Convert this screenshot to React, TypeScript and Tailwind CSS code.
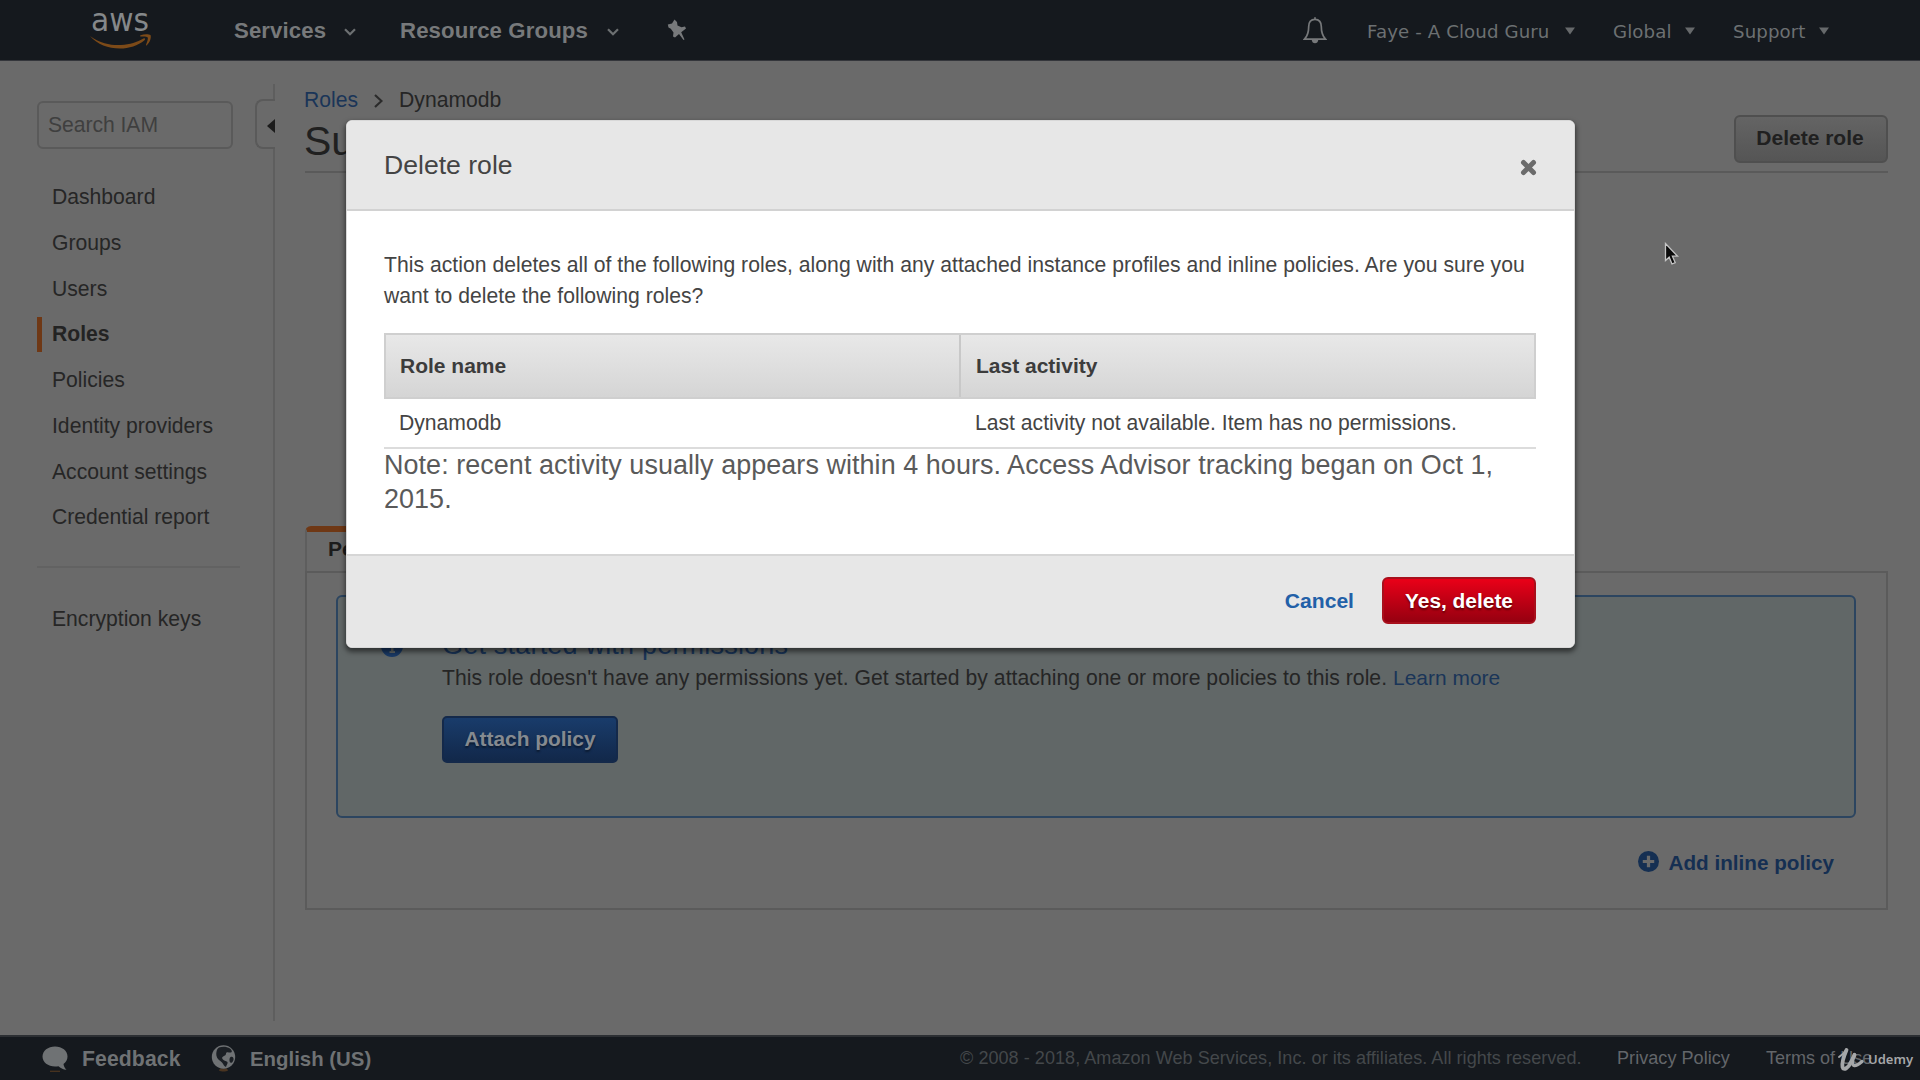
import type { ReactNode } from "react";

const NAV = [
  "Dashboard",
  "Groups",
  "Users",
  "Roles",
  "Policies",
  "Identity providers",
  "Account settings",
  "Credential report",
];

function AwsLogo() {
  return (
    <svg className="ml-[88px] h-[60px] w-[66px] shrink-0" viewBox="0 0 66 60">
      <text
        x="3"
        y="30.5"
        textLength="58"
        lengthAdjust="spacingAndGlyphs"
        fontSize="32"
        fill="#85888a"
        className="font-['DejaVu_Sans',sans-serif] font-normal"
      >
        aws
      </text>
      <path d="M2 36C13 44 24 45.500 33 45C42 44.500 49 42 55.500 38.500C57 37.800 57.800 39 56.500 40.200C50 45.500 41 48.500 32 48.500C20 48.500 9.500 44.500 2 36Z" fill="#7c4a18" />
      <path d="M52.500 35.200C56 33.800 61 34 62.500 35C63.500 37.500 62 42.500 58.800 45.200C58 45.700 57.800 45.300 58.100 44.500C59.300 41.500 60.400 38.300 59.600 37.200C58.500 36.200 55.500 36.400 53 36.500C52 36.500 51.800 35.700 52.500 35.200Z" fill="#7c4a18" />
    </svg>
  );
}

function Chevron({ className }: { className: string }) {
  return (
    <svg className={`h-2 w-3 shrink-0 ${className}`} viewBox="0 0 12 8" fill="none" stroke="#6c7072" strokeWidth="2.2">
      <path d="M1 1.200L6 6.200L11 1.200" />
    </svg>
  );
}

function Caret({ className }: { className: string }) {
  return (
    <svg className={`h-[8px] w-[10px] shrink-0 ${className}`} viewBox="0 0 10 8" fill="#66696b">
      <path d="M0 0.500H10L5 7.500Z" />
    </svg>
  );
}

function TopMenu({ label, width, children }: { label: string; width: string; children: ReactNode }) {
  return (
    <div className={`flex shrink-0 items-center ${width}`}>
      <span className="pt-[3px] font-['DejaVu_Sans',sans-serif] text-[18.2px] tracking-[0.1px] whitespace-nowrap text-[#6c7072]">
        {label}
      </span>
      {children}
    </div>
  );
}

function Header() {
  return (
    <header className="flex h-[61px] shrink-0 items-center border-b border-[#34363b] bg-[#15191e] text-[22.2px] font-bold text-[#77797b]">
      <AwsLogo />
      <span className="mt-[2px] ml-[80px] w-[92px] shrink-0 tracking-[0.1px] whitespace-nowrap">Services</span>
      <Chevron className="mt-[3px] ml-[18px]" />
      <span className="mt-[2px] ml-[44px] w-[187px] shrink-0 tracking-[0.12px] whitespace-nowrap">Resource Groups</span>
      <Chevron className="mt-[3px] ml-[20px]" />
      <svg className="ml-[48px] h-[22px] w-[20px] shrink-0" viewBox="0 0 20 22" fill="#77797b">
        <path d="M7.500 0.500L10 3L10.500 6.500L14.500 8.200L18 7.500L19 9.500L14.200 13.200L17.500 20.500L16.500 21L12 15L8 18.500L6 17.500L6.500 13.500L3.800 9.800L1.500 8.500L0.800 5.500L5 4.500Z" />
      </svg>
      <svg className="ml-auto h-[27px] w-[24px] shrink-0" viewBox="0 0 24 27" fill="none" stroke="#77797b" strokeWidth="1.700">
        <path d="M12 2.300C7.700 2.300 5.700 5.500 5.700 9.500C5.700 16 4.500 19 1.500 22.200H22.500C19.500 19 18.300 16 18.300 9.500C18.300 5.500 16.300 2.300 12 2.300ZM12 2.300V0.300" />
        <path d="M8.700 22.800C9 25.200 10.200 26.300 12 26.300C13.800 26.300 15 25.200 15.300 22.800Z" fill="#77797b" stroke="none" />
      </svg>
      <div className="flex w-[593px] shrink-0 pl-[40px] font-normal">
        <TopMenu label="Faye - A Cloud Guru" width="w-[246px]">
          <Caret className="mt-[3px] ml-[15px]" />
        </TopMenu>
        <TopMenu label="Global" width="w-[120px]">
          <Caret className="mt-[3px] ml-[13px]" />
        </TopMenu>
        <TopMenu label="Support" width="w-[120px]">
          <Caret className="mt-[3px] ml-[13px]" />
        </TopMenu>
      </div>
    </header>
  );
}

function Sidebar() {
  return (
    <aside className="flex w-[275px] shrink-0">
      <div className="w-[218px] pl-[37px]">
        <div className="mt-[40px] flex h-[48px] w-[196px] items-center rounded-md border-2 border-[#5a5a5a] pl-[9px] tracking-[-0.05px] text-[#3f3f3f]">
          Search IAM
        </div>
        <nav className="mt-[25px]">
          {NAV.map((item) => (
            <div key={item} className="flex h-[45.75px] items-center">
              <div
                className={
                  item === "Roles"
                    ? "flex h-[35px] items-center border-l-[5px] border-[#6f3815] pl-[10px] font-bold whitespace-nowrap text-[#232323]"
                    : "pl-[15px] whitespace-nowrap text-[#262626]"
                }
              >
                {item}
              </div>
            </div>
          ))}
        </nav>
        <div className="mt-[26px] w-[203px] border-t-2 border-[#626262]" />
        <div className="mt-[28px] flex h-[46px] items-center pl-[15px] whitespace-nowrap text-[#262626]">Encryption keys</div>
      </div>
      <div className="ml-[37px] flex w-[20px] flex-col">
        <div className="mt-[23px] h-[15px] border-r-2 border-[#5e5e5e]" />
        <div className="flex h-[50px] items-center justify-end rounded-l-lg border-2 border-r-0 border-[#5a5a5a] pt-[3px]">
          <svg className="h-[14px] w-[8px]" viewBox="0 0 8 14" fill="#1c1c1c">
            <path d="M8 0V14L0 7Z" />
          </svg>
        </div>
        <div className="h-[872px] border-r-2 border-[#5e5e5e]" />
      </div>
    </aside>
  );
}

function Main() {
  return (
    <main className="ml-[30px] w-[1583px] shrink-0">
      <div className="mt-[23px] flex h-[30px] items-center pt-[2px]">
        <span className="-ml-px text-[#1a3558]">Roles</span>
        <svg className="mt-[2px] ml-[16px] h-[14px] w-[9px]" viewBox="0 0 9 14" fill="none" stroke="#2b2b2b" strokeWidth="2.200">
          <path d="M1 1L7.500 7L1 13" />
        </svg>
        <span className="ml-[16px] text-[#252525]">Dynamodb</span>
      </div>
      <div className="flex h-[59px] justify-between border-b-2 border-[#5a5a5a]">
        <h1 className="-ml-px text-[41px] leading-[54px] text-[#202020]">Summary</h1>
        <button className="mt-[1px] flex h-[48px] w-[154px] items-center justify-center rounded-md border-2 border-[#4f4f4f] bg-linear-to-b from-[#646464] to-[#555555] pr-[2px] pb-[3px] text-[21px] font-bold text-[#202020]">
          Delete role
        </button>
      </div>
      <div className="mt-[353px] flex">
        <div className="h-[45px] w-[180px] rounded-t-md border-x-2 border-t-[6px] border-x-[#5e5e5e] border-t-[#6f3815] pl-[21px] text-[21px] leading-[34px] font-bold text-[#1c1c1c]">
          Permissions
        </div>
      </div>
      <section className="h-[339px] border-2 border-[#5b5b5b] pt-[22px] pr-[30px] pl-[29px]">
        <div className="flex h-[223px] rounded-md border-2 border-[#2c4560] bg-[#616767] pl-[43px]">
          <svg className="mt-[38px] h-[22px] w-[22px]" viewBox="0 0 22 22">
            <circle cx="11" cy="11" r="11" fill="#1a3a66" />
            <path d="M9 9H12.500V16H14V18H8.500V16H10V11H9ZM9.800 4H12.500V6.800H9.800Z" fill="#616767" />
          </svg>
          <div className="ml-[39px]">
            <h2 className="mt-[30px] h-[35px] text-[27px] leading-[36px] tracking-[0.2px] text-[#1a3558]">
              Get started with permissions
            </h2>
            <p className="leading-[32px] tracking-[0.044px] whitespace-nowrap text-[#252525]">
              This role doesn't have any permissions yet. Get started by attaching one or more policies to this role.{" "}
              <a className="text-[20.9px] text-[#1a3558]">Learn more</a>
            </p>
            <button className="mt-[22px] flex h-[47px] w-[176px] items-center justify-center rounded-[5px] border-2 border-[#14294a] bg-linear-to-b from-[#193c6b] to-[#12284a] pb-[2px] text-[20.9px] font-bold text-[#858a90] [text-shadow:0_2px_2px_#0b1a30]">
              Attach policy
            </button>
          </div>
        </div>
        <div className="mt-[27px] mr-[22px] flex h-[36px] items-center justify-end">
          <svg className="mb-[3px] h-[21px] w-[21px]" viewBox="0 0 22 22">
            <circle cx="11" cy="11" r="11" fill="#152f52" />
            <path d="M9.300 5H12.700V9.300H17V12.700H12.700V17H9.300V12.700H5V9.300H9.300Z" fill="#6a6a6a" />
          </svg>
          <span className="ml-[9px] text-[20.7px] font-bold text-[#152f52]">Add inline policy</span>
        </div>
      </section>
    </main>
  );
}

function Footer() {
  return (
    <footer className="flex h-[45px] shrink-0 items-center border-t-2 border-[#2c2f33] bg-[#15191e] text-[#6f7274]">
      <svg className="ml-[42px] h-[26px] w-[26px] shrink-0" viewBox="0 0 26 26">
        <path d="M13 0.500C20 0.500 25.500 4.800 25.500 10.500C25.500 13.500 24 16.200 21.500 18C21.700 20 22.700 22 24.500 23.800C21 23.500 18.300 22 16.500 20.200C15.400 20.400 14.200 20.500 13 20.500C6 20.500 0.500 16.200 0.500 10.500C0.500 4.800 6 0.500 13 0.500Z" fill="#6f7274" />
        <path d="M8 25.300H18" stroke="#4a3420" strokeWidth="1.300" />
      </svg>
      <span className="mt-px ml-[14px] w-[99px] text-[21.2px] font-bold tracking-[0.1px] whitespace-nowrap">Feedback</span>
      <svg className="-mt-px ml-[30px] h-[27px] w-[26px] shrink-0" viewBox="0 0 26 27">
        <path d="M8 25.500C10 26.800 15 26.800 17 25.500L16 23.500H9Z" fill="#4a3420" />
        <circle cx="12.500" cy="12" r="11.700" fill="#6f7274" />
        <path d="M8 2.500C11 1.500 16 1.500 19 3.500C21 5 21.500 7 20 7.500C18.500 8 17 6.500 15.500 7.500C14.500 8.500 15.500 9.500 14 10.500C12 11.500 10.500 12 11.500 14C12.500 16 15 15.500 16.500 17C17 18.500 15.500 20 15 22C13 21.500 12.500 19 11 17.500C9 15.500 6 14 5.500 11C5 8 5.500 4 8 2.500ZM19.500 12C21.500 11 23 12.500 22.500 15C21.500 18 19.500 18.500 18.800 17C18.300 15.500 18.300 13 19.500 12Z" fill="#1b1f24" />
      </svg>
      <span className="mt-px ml-[13px] w-[121px] text-[20.4px] font-bold whitespace-nowrap">English (US)</span>
      <div className="ml-auto flex w-[960px] shrink-0 pt-px text-[18.05px] whitespace-nowrap text-[#63666a]">
        <span className="w-[657px] tracking-[0.045px] text-[#44484b]">
          © 2008 - 2018, Amazon Web Services, Inc. or its affiliates. All rights reserved.
        </span>
        <span className="w-[149px] tracking-[0.05px]">Privacy Policy</span>
        <span>Terms of Use</span>
      </div>
    </footer>
  );
}

function DeleteDialog() {
  return (
    <div className="absolute top-[120px] left-[346px] flex h-[528px] w-[1229px] flex-col overflow-hidden rounded-[6px] border border-[#d8d8d8] bg-white text-[#444444] shadow-[0_3px_5px_1px_rgba(0,0,0,0.5)]">
      <div className="flex h-[90px] shrink-0 items-center justify-between border-b-2 border-[#d2d2d2] bg-[#e7e7e7] pt-[2px] pr-[37px] pl-[37px]">
        <h3 className="text-[26.6px]">Delete role</h3>
        <svg className="mt-[3px] h-[17px] w-[17px]" viewBox="0 0 17 17" stroke="#6b6b6b" strokeWidth="5" strokeLinecap="round">
          <path d="M3.500 3.500L13.500 13.500M13.500 3.500L3.500 13.500" />
        </svg>
      </div>
      <div className="h-[343px] shrink-0 pt-[38px] pr-[38px] pl-[37px]">
        <p className="h-[84px] leading-[31px] tracking-[0.025px] whitespace-nowrap">
          This action deletes all of the following roles, along with any attached instance profiles and inline policies. Are you
          sure you
          <br />
          want to delete the following roles?
        </p>
        <div className="grid h-[66px] grid-cols-[575px_573px] border-2 border-[#cfcfcf] bg-linear-to-b from-[#e8e8e8] to-[#d5d5d5] text-[21px] leading-[61px] font-bold text-[#3c3c3c]">
          <div className="border-r-2 border-[#c8c8c8] pl-[14px]">Role name</div>
          <div className="pl-[15px]">Last activity</div>
        </div>
        <div className="grid h-[50px] grid-cols-[577px_575px] border-b-2 border-[#dcdcdc] leading-[48px]">
          <div className="pl-[15px]">Dynamodb</div>
          <div className="pl-[14px]">Last activity not available. Item has no permissions.</div>
        </div>
        <p className="text-[26.95px] leading-[33.5px] tracking-[0.06px] whitespace-nowrap text-[#5a5a5a]">
          Note: recent activity usually appears within 4 hours. Access Advisor tracking began on Oct 1,
          <br />
          2015.
        </p>
      </div>
      <div className="flex flex-1 items-center justify-end border-t-2 border-[#d6d6d6] bg-[#e7e7e7] pr-[38px] pb-[2px]">
        <button className="text-[21.1px] font-bold text-[#2260a8]">Cancel</button>
        <button className="ml-[28px] flex h-[47px] w-[154px] items-center justify-center rounded-[6px] border-2 border-[#a8101c] bg-linear-to-b from-[#ea0018] to-[#960010] text-[20.9px] font-bold text-white [text-shadow:0_2px_2px_rgba(70,0,0,0.75)]">
          Yes, delete
        </button>
      </div>
    </div>
  );
}

function Pointer() {
  return (
    <svg className="absolute top-[242px] left-[1664px] h-[24px] w-[15px]" viewBox="0 0 15 24">
      <path d="M1.500 1.500V18.500L5.200 15.200L8 22L11.200 20.600L8.400 14.200H13.500Z" fill="#0a0a0a" stroke="#c4c4c4" strokeWidth="1.300" />
    </svg>
  );
}

function Watermark() {
  return (
    <div className="absolute top-[1045px] left-[1837px] flex h-[28px] w-[83px] items-center text-[#a5a7a9]">
      <svg className="h-[26px] w-[28px] shrink-0" viewBox="0 0 28 26" fill="none" stroke="#a5a7a9" strokeLinecap="round" strokeLinejoin="round">
        <path d="M2 11C5 9 8 6 9.500 3.500" strokeWidth="2" />
        <path d="M9.500 4C7 10 4.500 17 5.500 21C6.500 25 11.500 22 14 16L17.500 9" strokeWidth="3.800" />
        <path d="M17.500 8.500C15.500 13 14.500 18.500 17 19.500C19.500 20.300 22 18 25 15.500" strokeWidth="3.400" />
      </svg>
      <span className="ml-[3px] pt-px font-['Noto_Sans',sans-serif] text-[13px] leading-none font-semibold">Udemy</span>
    </div>
  );
}

export default function App() {
  return (
    <div className="relative flex h-[1080px] w-[1920px] flex-col overflow-hidden bg-[#6a6a6a] font-['Liberation_Sans',Arial,sans-serif] text-[21.15px]">
      <Header />
      <div className="flex h-[974px] shrink-0">
        <Sidebar />
        <Main />
      </div>
      <Footer />
      <DeleteDialog />
      <Pointer />
      <Watermark />
    </div>
  );
}
